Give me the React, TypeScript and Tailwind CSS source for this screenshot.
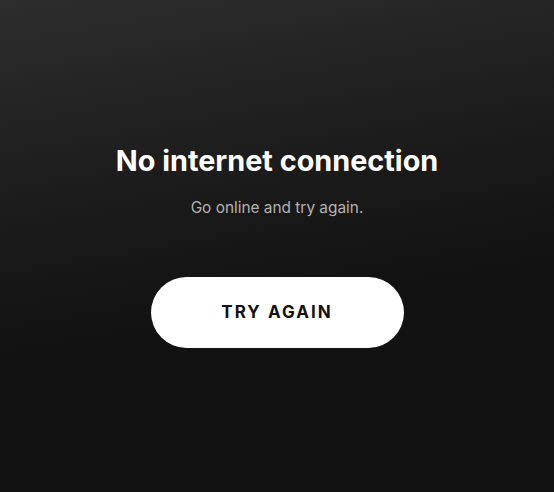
export default function App() {
  return (
    <div className="flex h-[492px] w-full flex-col items-center bg-[linear-gradient(170deg,#2d2d2d_0%,#1c1c1c_35%,#121212_60%,#121212_100%)] font-['Inter',sans-serif]">
      <h1 className="mt-[143px] text-[28.8px] font-bold leading-[36px] text-white">
        No internet connection
      </h1>
      <p className="mt-[19px] text-[15.4px] leading-[20px] text-[#b3b3b3]">
        Go online and try again.
      </p>
      <button className="mt-[59px] h-[71px] w-[253px] rounded-full bg-white text-[17px] font-bold tracking-[0.12em] text-[#121212]">
        TRY AGAIN
      </button>
    </div>
  )
}
